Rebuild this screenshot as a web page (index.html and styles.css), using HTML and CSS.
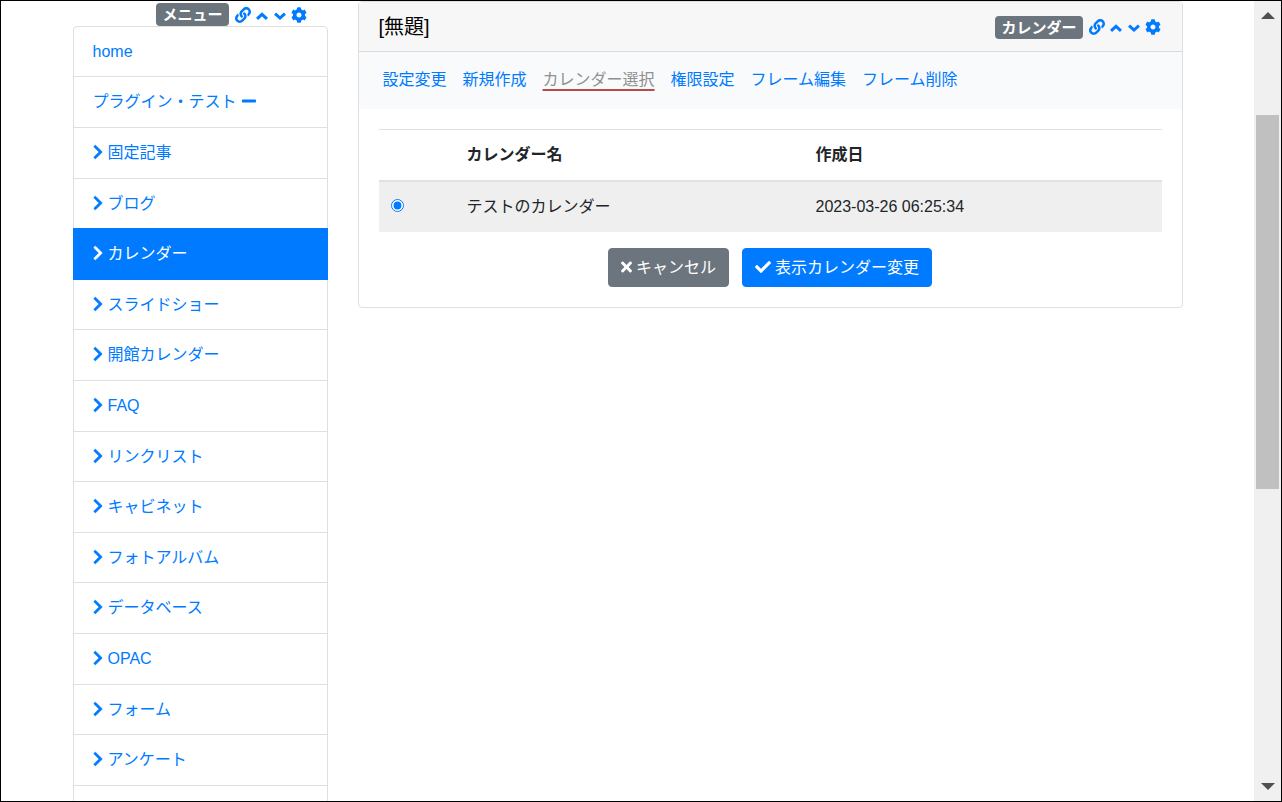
FILE: index.html
```html
<!DOCTYPE html>
<html lang="ja">
<head>
<meta charset="utf-8">
<meta name="viewport" content="width=device-width, initial-scale=1">
<title>カレンダー選択</title>
<link rel="stylesheet" href="styles.css">
</head>
<body>
<svg class="sprite" aria-hidden="true">
  <symbol id="right" viewBox="0 0 320 512"><path stroke="currentColor" stroke-width="14" d="M285.476 272.971L91.132 467.314c-9.373 9.373-24.569 9.373-33.941 0l-22.667-22.667c-9.357-9.357-9.375-24.522-.04-33.901L188.505 256 34.484 101.255c-9.335-9.379-9.317-24.544.04-33.901l22.667-22.667c9.373-9.373 24.569-9.373 33.941 0L285.475 239.03c9.373 9.372 9.373 24.568.001 33.941z"/></symbol>
  <symbol id="up" viewBox="0 0 448 512"><path fill="none" stroke="currentColor" stroke-width="96" d="M66 378L224 236l158 142"/></symbol>
  <symbol id="down" viewBox="0 0 448 512"><path fill="none" stroke="currentColor" stroke-width="96" d="M66 212l158 142 158-142"/></symbol>
  <symbol id="minus" viewBox="0 0 448 512"><path d="M416 208H32c-17.67 0-32 14.33-32 32v32c0 17.67 14.33 32 32 32h384c17.67 0 32-14.33 32-32v-32c0-17.67-14.33-32-32-32z"/></symbol>
  <symbol id="link" viewBox="0 0 512 512"><path d="M326.612 185.391c59.747 59.809 58.927 155.698.36 214.59-.11.12-.24.25-.36.37l-67.2 67.2c-59.27 59.27-155.699 59.262-214.96 0-59.27-59.26-59.27-155.7 0-214.96l37.106-37.106c9.84-9.84 26.786-3.3 27.294 10.606.648 17.722 3.826 35.527 9.69 52.721 1.986 5.822.567 12.262-3.783 16.612l-13.087 13.087c-28.026 28.026-28.905 73.66-1.155 101.96 28.024 28.579 74.086 28.749 102.325.51l67.2-67.19c28.191-28.191 28.073-73.757 0-101.83-3.701-3.694-7.429-6.564-10.341-8.569a16.037 16.037 0 0 1-6.947-12.606c-.396-10.567 3.348-21.456 11.698-29.806l21.054-21.055c5.521-5.521 14.182-6.199 20.584-1.731a152.482 152.482 0 0 1 20.522 17.197zM467.547 44.449c-59.261-59.262-155.69-59.27-214.96 0l-67.2 67.2c-.12.12-.25.25-.36.37-58.566 58.892-59.387 154.781.36 214.59a152.454 152.454 0 0 0 20.521 17.196c6.402 4.468 15.064 3.789 20.584-1.731l21.054-21.055c8.35-8.35 12.094-19.239 11.698-29.806a16.037 16.037 0 0 0-6.947-12.606c-2.912-2.005-6.64-4.875-10.341-8.569-28.073-28.073-28.191-73.639 0-101.83l67.2-67.19c28.239-28.239 74.3-28.069 102.325.51 27.75 28.3 26.872 73.934-1.155 101.96l-13.087 13.087c-4.35 4.35-5.769 10.79-3.783 16.612 5.864 17.194 9.042 34.999 9.69 52.721.509 13.906 17.454 20.446 27.294 10.606l37.106-37.106c59.271-59.259 59.271-155.699.001-214.959z"/></symbol>
  <symbol id="cog" viewBox="0 0 512 512"><path d="M487.4 315.7l-42.6-24.6c4.3-23.2 4.3-47 0-70.2l42.6-24.6c4.9-2.8 7.1-8.6 5.5-14-11.1-35.6-30-67.8-54.7-94.6-3.8-4.1-10-5.1-14.8-2.3L380.8 110c-17.9-15.4-38.5-27.3-60.8-35.1V25.800c0-5.600-3.900-10.500-9.400-11.700-36.700-8.200-74.300-7.800-109.200 0-5.500 1.200-9.400 6.100-9.400 11.700V75c-22.200 7.900-42.800 19.800-60.800 35.100L88.700 85.500c-4.900-2.800-11-1.900-14.800 2.300-24.700 26.700-43.600 58.900-54.700 94.600-1.700 5.400.6 11.200 5.500 14L67.300 221c-4.300 23.200-4.300 47 0 70.200l-42.6 24.600c-4.900 2.800-7.100 8.600-5.500 14 11.100 35.600 30 67.800 54.700 94.600 3.800 4.100 10 5.100 14.800 2.300l42.600-24.600c17.900 15.400 38.500 27.300 60.800 35.100v49.200c0 5.600 3.900 10.500 9.400 11.700 36.700 8.200 74.300 7.800 109.200 0 5.500-1.200 9.400-6.100 9.400-11.700v-49.200c22.200-7.900 42.800-19.800 60.800-35.100l42.6 24.600c4.900 2.800 11 1.900 14.800-2.300 24.700-26.700 43.600-58.900 54.700-94.600 1.500-5.500-.7-11.300-5.600-14.100zM256 336c-44.100 0-80-35.900-80-80s35.900-80 80-80 80 35.900 80 80-35.900 80-80 80z"/></symbol>
  <symbol id="times" viewBox="0 0 352 512"><path d="M242.720 256l100.070-100.070c12.280-12.280 12.280-32.190 0-44.480l-22.240-22.240c-12.280-12.280-32.190-12.280-44.480 0L176 189.280 75.930 89.210c-12.280-12.280-32.190-12.280-44.480 0L9.210 111.450c-12.280 12.280-12.280 32.190 0 44.480L109.280 256 9.210 356.070c-12.280 12.280-12.280 32.190 0 44.480l22.240 22.240c12.280 12.280 32.200 12.280 44.480 0L176 322.720l100.070 100.070c12.280 12.280 32.200 12.280 44.480 0l22.240-22.240c12.280-12.280 12.280-32.190 0-44.480L242.720 256z"/></symbol>
  <symbol id="check" viewBox="0 0 512 512"><path d="M173.898 439.404l-166.400-166.400c-9.997-9.997-9.997-26.206 0-36.204l36.203-36.204c9.997-9.998 26.207-9.998 36.204 0L192 312.690 432.095 72.596c9.997-9.997 26.207-9.997 36.204 0l36.203 36.204c9.997 9.997 9.997 26.206 0 36.204l-294.400 294.401c-9.998 9.997-26.207 9.997-36.204-.001z"/></symbol>
</svg>
<div class="window">
  <div class="page">
    <div class="container">
      <aside class="side">
        <div class="tools side-tools">
          <span class="badge">メニュー</span>
          <a href="#" aria-label="リンク"><svg class="icon w16"><use href="#link"/></svg></a>
          <a href="#" aria-label="上へ"><svg class="icon w14"><use href="#up"/></svg></a>
          <a href="#" aria-label="下へ"><svg class="icon w14"><use href="#down"/></svg></a>
          <a href="#" aria-label="設定"><svg class="icon w16"><use href="#cog"/></svg></a>
        </div>
        <nav class="menu">
          <a href="#">home</a>
          <a href="#">プラグイン・テスト<svg class="icon w14"><use href="#minus"/></svg></a>
          <a href="#"><svg class="icon w10"><use href="#right"/></svg>固定記事</a>
          <a href="#"><svg class="icon w10"><use href="#right"/></svg>ブログ</a>
          <a href="#" class="active" aria-current="page"><svg class="icon w10"><use href="#right"/></svg>カレンダー</a>
          <a href="#"><svg class="icon w10"><use href="#right"/></svg>スライドショー</a>
          <a href="#"><svg class="icon w10"><use href="#right"/></svg>開館カレンダー</a>
          <a href="#"><svg class="icon w10"><use href="#right"/></svg>FAQ</a>
          <a href="#"><svg class="icon w10"><use href="#right"/></svg>リンクリスト</a>
          <a href="#"><svg class="icon w10"><use href="#right"/></svg>キャビネット</a>
          <a href="#"><svg class="icon w10"><use href="#right"/></svg>フォトアルバム</a>
          <a href="#"><svg class="icon w10"><use href="#right"/></svg>データベース</a>
          <a href="#"><svg class="icon w10"><use href="#right"/></svg>OPAC</a>
          <a href="#"><svg class="icon w10"><use href="#right"/></svg>フォーム</a>
          <a href="#"><svg class="icon w10"><use href="#right"/></svg>アンケート</a>
        </nav>
      </aside>
      <main class="card">
        <header class="card-header">
          <h1>[無題]</h1>
          <div class="tools">
            <span class="badge">カレンダー</span>
            <a href="#" aria-label="リンク"><svg class="icon w16"><use href="#link"/></svg></a>
            <a href="#" aria-label="上へ"><svg class="icon w14"><use href="#up"/></svg></a>
            <a href="#" aria-label="下へ"><svg class="icon w14"><use href="#down"/></svg></a>
            <a href="#" aria-label="設定"><svg class="icon w16"><use href="#cog"/></svg></a>
          </div>
        </header>
        <nav class="tabs">
          <a href="#">設定変更</a>
          <a href="#">新規作成</a>
          <a href="#" class="current" aria-current="page">カレンダー選択</a>
          <a href="#">権限設定</a>
          <a href="#">フレーム編集</a>
          <a href="#">フレーム削除</a>
        </nav>
        <form class="card-body">
          <table>
            <colgroup><col class="col-pick"><col class="col-name"><col></colgroup>
            <thead>
              <tr><th></th><th scope="col">カレンダー名</th><th scope="col">作成日</th></tr>
            </thead>
            <tbody>
              <tr>
                <td><input type="radio" id="calendar-1" name="calendar" checked></td>
                <td><label for="calendar-1">テストのカレンダー</label></td>
                <td>2023-03-26 06:25:34</td>
              </tr>
            </tbody>
          </table>
          <div class="actions">
            <button type="button" class="secondary"><svg class="icon w11"><use href="#times"/></svg>キャンセル</button>
            <button type="submit" class="primary"><svg class="icon w16"><use href="#check"/></svg>表示カレンダー変更</button>
          </div>
        </form>
      </main>
    </div>
  </div>
  <div class="scrollbar" aria-hidden="true">
    <svg class="arrow" viewBox="0 0 14 7"><path d="M7 0l7 7H0z"/></svg>
    <div class="track"><div class="thumb"></div></div>
    <svg class="arrow" viewBox="0 0 14 7"><path d="M0 0h14L7 7z"/></svg>
  </div>
</div>
</body>
</html>
```
FILE: styles.css
```css
* {
  box-sizing: border-box;
}

body {
  margin: 0;
  color: #212529;
  background: #fff;
  font-family: "Liberation Sans", "Noto Sans CJK JP", sans-serif;
  font-size: 16px;
  line-height: 26px;
}

a {
  color: #007bff;
  text-decoration: none;
}

.sprite {
  display: none;
}

.icon {
  flex: none;
  height: 16px;
  fill: currentColor;
}

.w10 { width: 10px; }
.w11 { width: 11px; }
.w14 { width: 14px; }
.w16 { width: 16px; }

.window {
  display: flex;
  height: 100vh;
  border: 1px solid #000;
  overflow: hidden;
}

.page {
  flex: 1;
  min-width: 0;
  overflow: hidden;
}

.container {
  display: grid;
  grid-template-columns: 255px minmax(0, 1fr);
  gap: 30px;
  align-items: start;
  max-width: 1110px;
  margin: 0 auto;
}

.tools {
  display: flex;
  align-items: center;
  gap: 4px;
}

.tools a {
  display: flex;
}

.side-tools {
  justify-content: flex-end;
  padding: 2px 21px 0 0;
}

.badge {
  margin-right: 2px;
  padding: 0 6px;
  border-radius: 4px;
  color: #fff;
  background: #6c757d;
  font-size: 15px;
  font-weight: 700;
  line-height: 23px;
}

.menu {
  display: grid;
  grid-template-rows: repeat(3, 50px 51px 51px 50px 51px);
  padding-bottom: 50px;
  border: 1px solid #dfdfdf;
  border-radius: 4px;
}

.menu a {
  display: flex;
  align-items: center;
  gap: 5px;
  padding: 0 19px;
  border-bottom: 1px solid #dfdfdf;
}

.menu .icon {
  margin-bottom: 2px;
}

.menu .active {
  margin: -1px -1px 0;
  padding: 0 20px;
  border-color: #007bff;
  color: #fff;
  background: #007bff;
}

.card {
  border: 1px solid #dfdfdf;
  border-radius: 4px;
}

.card-header {
  display: flex;
  align-items: center;
  justify-content: space-between;
  padding: 12px 21px 11px 20px;
  border-bottom: 1px solid #dadada;
  background: #f7f7f7;
}

h1 {
  margin: 0;
  color: #000;
  font-size: 20px;
  font-weight: 400;
  line-height: 26px;
}

.tabs {
  display: flex;
  flex-wrap: wrap;
  padding: 15px 16px 16px;
  background: #f8fafc;
}

.tabs a {
  padding: 0 8px;
}

.tabs .current {
  color: #909090;
  text-decoration: underline 2px #b94a48;
  text-decoration-skip-ink: none;
  text-underline-offset: 4px;
}

.card-body {
  padding: 20px;
}

table {
  width: 100%;
  margin-bottom: 16px;
  border-spacing: 0;
  table-layout: fixed;
}

.col-pick { width: 76px; }
.col-name { width: 349px; }

th,
td {
  padding: 12px;
  text-align: left;
}

th {
  border-top: 1px solid #dee2e6;
  border-bottom: 2px solid #dee2e6;
}

td {
  background: #efefef;
}

input[type="radio"] {
  display: block;
  width: 13px;
  height: 13px;
  margin: 0 0 3px;
  accent-color: #007bff;
}

.actions {
  display: flex;
  justify-content: center;
  gap: 13px;
}

button {
  display: flex;
  align-items: center;
  gap: 4px;
  padding: 6px 12px;
  border: 1px solid;
  border-radius: 4px;
  color: #fff;
  font: inherit;
  line-height: 25px;
}

button .icon {
  margin-bottom: 2px;
}

.secondary {
  border-color: #6c757d;
  background: #6c757d;
}

.primary {
  border-color: #007bff;
  background: #007bff;
}

.scrollbar {
  display: flex;
  flex-direction: column;
  align-items: center;
  gap: 12px;
  width: 27px;
  padding: 11px 0;
  background: #f0f0f0;
}

.arrow {
  width: 14px;
  height: 7px;
  fill: #505050;
}

.track {
  flex: 1;
  width: 23px;
  padding-top: 84px;
}

.thumb {
  height: 57%;
  background: #c0c0c0;
}
```
